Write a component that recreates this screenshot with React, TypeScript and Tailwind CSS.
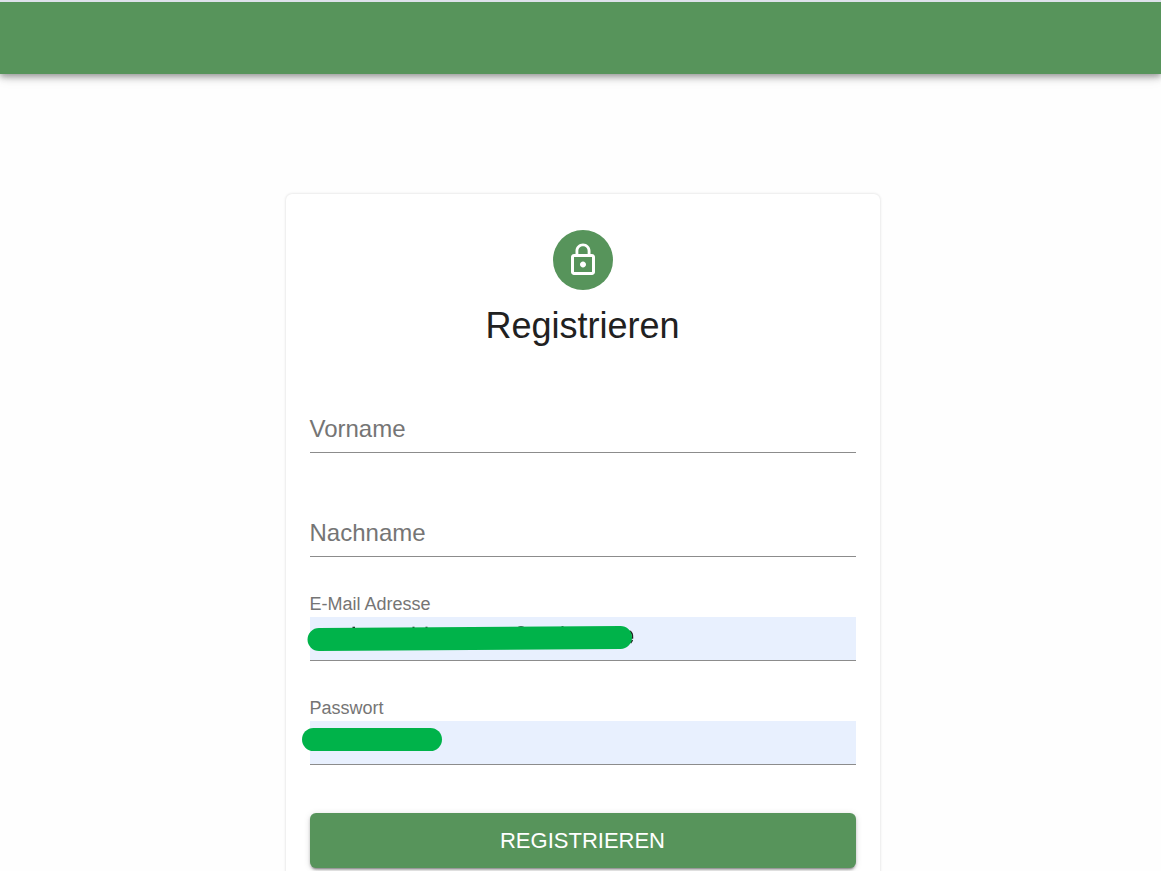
import { useState } from "react";

type FieldProps = {
  id: string;
  label: string;
  type?: string;
  autofilled?: boolean;
  children?: React.ReactNode;
};

function Field({ id, label, type = "text", autofilled = false, children }: FieldProps) {
  const [value, setValue] = useState("");
  const raised = autofilled || value !== "";

  return (
    <div className="relative pt-7">
      <input
        id={id}
        name={id}
        type={type}
        value={value}
        onChange={(event) => setValue(event.target.value)}
        className={
          "block h-11 w-full border-b border-[#8c8c8c] text-2xl text-[#212121] outline-none " +
          (autofilled ? "bg-[#e8f0fe]" : "bg-transparent")
        }
      />
      <label
        htmlFor={id}
        className={
          "pointer-events-none absolute left-0 text-[#757575] " +
          (raised ? "top-[5px] text-[18px] leading-5" : "top-8 text-[24px] leading-8")
        }
      >
        {label}
      </label>
      {children}
    </div>
  );
}

function LockIcon() {
  return (
    <svg viewBox="0 0 24 24" className="size-9" fill="currentColor" aria-hidden="true">
      <path d="M12 17c1.1 0 2-.9 2-2s-.9-2-2-2-2 .9-2 2 .9 2 2 2zm6-9h-1V6c0-2.76-2.24-5-5-5S7 3.24 7 6v2H6c-1.1 0-2 .9-2 2v10c0 1.1.9 2 2 2h12c1.1 0 2-.9 2-2V10c0-1.1-.9-2-2-2zM8.9 6c0-1.71 1.39-3.1 3.1-3.1s3.1 1.39 3.1 3.1v2H8.9V6zM18 20H6V10h12v10z" />
    </svg>
  );
}

export default function App() {
  return (
    <div className="min-h-screen overflow-x-hidden bg-[#fefefe] font-['Liberation_Sans',Arial,sans-serif] text-[#212121]">
      <header className="h-[74px] border-t-2 border-[#dee1eb] bg-[#57945b] shadow-[0_2px_6px_rgba(0,0,0,0.28),0_4px_8px_rgba(0,0,0,0.14),0_1px_15px_rgba(0,0,0,0.1)]" />
      <main className="pt-[120px] pl-1">
        <section className="mx-auto flex w-full max-w-[594px] flex-col items-center rounded-md bg-white px-6 pt-9 pb-9 shadow-[0_0_3px_rgba(0,0,0,0.16)]">
          <div className="flex size-[60px] items-center justify-center rounded-full bg-[#57945b] text-white">
            <LockIcon />
          </div>
          <h1 className="mt-3 text-[36px] leading-[47px]">Registrieren</h1>
          <form className="mt-8 flex w-full flex-col gap-8" onSubmit={(event) => event.preventDefault()}>
            <Field id="vorname" label="Vorname" />
            <Field id="nachname" label="Nachname" />
            <Field id="email" label="E-Mail Adresse" type="email" autofilled>
              <svg viewBox="0 0 340 32" className="pointer-events-none absolute top-[35px] -left-2 h-8 w-[340px]" fill="none" aria-hidden="true">
                <path d="M50.500 3.500h2.500M110.500 3.500h2M123.500 3.500h2M215.500 4q3.500-2 7 0M259.500 3h2" stroke="#212121" strokeWidth="1.500" />
                <path d="M327.500 7q3.500 2 3 7h-4M330.500 16l-2 3" stroke="#212121" strokeWidth="1.500" />
                <path d="M17 15.500L318.500 13.500" stroke="#00b34a" strokeWidth="23" strokeLinecap="round" />
              </svg>
            </Field>
            <Field id="passwort" label="Passwort" type="password" autofilled>
              <svg viewBox="0 0 144 24" className="pointer-events-none absolute top-[35px] -left-2 h-6 w-36" fill="none" aria-hidden="true">
                <path d="M11.500 11.500h117" stroke="#00b34a" strokeWidth="23" strokeLinecap="round" />
              </svg>
            </Field>
            <button
              type="submit"
              className="mt-4 h-[55px] w-full rounded-md bg-[#57945b] text-[22px] leading-9 text-white uppercase shadow-[0_3px_2px_-2px_rgba(0,0,0,0.3),0_2px_3px_rgba(0,0,0,0.2),0_1px_7px_rgba(0,0,0,0.12)]"
            >
              Registrieren
            </button>
          </form>
        </section>
      </main>
    </div>
  );
}
